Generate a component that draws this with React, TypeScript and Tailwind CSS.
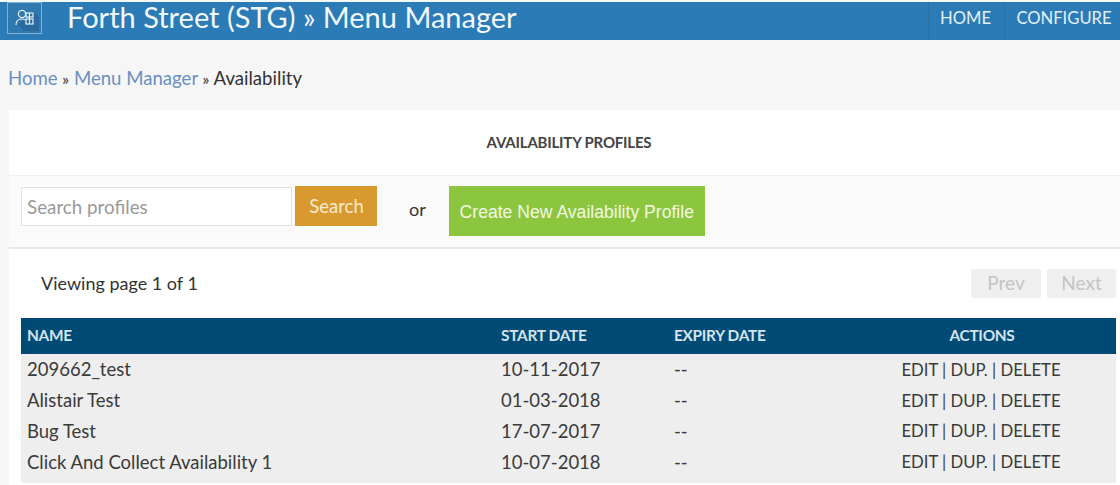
const rows = [
  ["209662_test", "10-11-2017"],
  ["Alistair Test", "01-03-2018"],
  ["Bug Test", "17-07-2017"],
  ["Click And Collect Availability 1", "10-07-2018"],
];

function Logo() {
  return (
    <div className="w-[35px] h-[32px] border border-[#7fb2d6] flex items-center justify-center bg-[#2f79b0] overflow-hidden -translate-y-[3px]">
      <svg width="28" height="26" viewBox="0 0 28 26" fill="none" stroke="#e8f2f9" strokeWidth="1.2">
        <path d="M7 20l6 6h15V12l-6-6z" fill="#2a6a9e" stroke="none" />
        <circle cx="11" cy="9" r="3.600" />
        <path d="M5 20c0-4 2.500-6 6-6 1.600 0 3 .4 4 1.400" />
        <rect x="15" y="8" width="7" height="4" />
        <rect x="15" y="14" width="7" height="5" />
        <path d="M18.500 8v11" />
      </svg>
    </div>
  );
}

export default function App() {
  return (
    <div className="w-[1120px] h-[485px] overflow-hidden bg-[#f6f6f6] font-['Lato','Open_Sans',sans-serif]">
      <div className="h-[2px] bg-[#f4f8fb]" />
      <header className="h-[38px] bg-[#2a7bb6] flex items-center justify-between pl-[7px] text-white">
        <div className="flex items-center">
          <Logo />
          <h1 className="ml-[25px] text-[29px] leading-[28px] font-normal text-[#f2f8fc] -translate-y-[4px]">Forth Street (STG) » Menu Manager</h1>
        </div>
        <nav className="flex h-full text-[16.600px] text-[#e4f0f8]">
          <a className="w-[77px] flex items-center justify-center border-x border-[#2770a6] pb-[6px] pr-[2px]">HOME</a>
          <a className="w-[115px] flex items-center justify-center pb-[6px] pl-[3px]">CONFIGURE</a>
        </nav>
      </header>

      <div className="h-[70px] pl-[8px] pt-[27px] text-[18.600px] leading-[22px] text-[#333]">
        <a className="text-[#6a8fc4]">Home</a> <span className="text-[#555] text-[15px] font-bold">»</span> <a className="text-[#6a8fc4]">Menu Manager</a> <span className="text-[#555] text-[15px] font-bold">»</span> <span>Availability</span>
      </div>

      <main className="ml-[9px] bg-white h-[375px]">
        <div className="h-[65px] flex items-center justify-center pl-[9px] text-[15px] font-bold text-[#444] tracking-[-0.2px]">AVAILABILITY PROFILES</div>
        <div className="h-[74px] bg-[#fafafa] border-y border-y-[#f0f0f0] border-b-[#e8e8e8] border-b-2 flex items-start pl-[12px] pt-[11px]">
          <div className="w-[271px] h-[39px] border border-[#e2e2e2] bg-white flex items-center pl-[5px] pt-[2px] text-[18.800px] text-[#999]">Search profiles</div>
          <button className="ml-[3px] w-[82px] h-[40px] bg-[#d89a2e] text-[#f7ead2] text-[18.500px] -translate-y-px pl-[1px] pt-[1px]">Search</button>
          <span className="ml-[32px] mt-[10px] text-[18px] leading-[24px] text-[#333]">or</span>
          <button className="ml-[23px] w-[256px] h-[50px] bg-[#8cc63f] text-[#f1f8e4] text-[17.600px] font-['Liberation_Sans',sans-serif] -translate-y-px pt-[3px]">Create New Availability Profile</button>
        </div>

        <div className="h-[69px] pl-[32px] pr-[4px] flex items-center justify-between">
          <span className="text-[18px] text-[#333]">Viewing page 1 of 1</span>
          <div className="flex gap-[6px]">
            <span className="w-[70px] h-[29px] rounded-[2px] bg-[#efefef] text-[#c4c4c4] text-[19px] flex items-center justify-center">Prev</span>
            <span className="w-[69px] h-[29px] rounded-[2px] bg-[#efefef] text-[#c4c4c4] text-[19px] flex items-center justify-center">Next</span>
          </div>
        </div>

        <div className="ml-[12px] w-[1095px] bg-[#eeeeee] pb-[5px]">
          <div className="h-[36px] mb-[1px] bg-[#004b76] grid grid-cols-[474px_173px_180px_268px] items-center text-[15.400px] font-bold text-[#d5e3ec] tracking-[-0.3px]">
            <span className="pl-[6px]">NAME</span>
            <span className="pl-[6px]">START DATE</span>
            <span className="pl-[6px]">EXPIRY DATE</span>
            <span className="text-center">ACTIONS</span>
          </div>
          {rows.map(([name, date]) => (
            <div key={name} className="h-[30.700px] grid grid-cols-[474px_173px_180px_268px] items-center text-[18.500px] text-[#3a3a3a]">
              <span className="pl-[6px]">{name}</span>
              <span className="pl-[6px]">{date}</span>
              <span className="pl-[6px]">--</span>
              <span className="text-center text-[16.700px] -translate-x-[1px]">EDIT | DUP. | DELETE</span>
            </div>
          ))}
        </div>
      </main>
    </div>
  );
}
